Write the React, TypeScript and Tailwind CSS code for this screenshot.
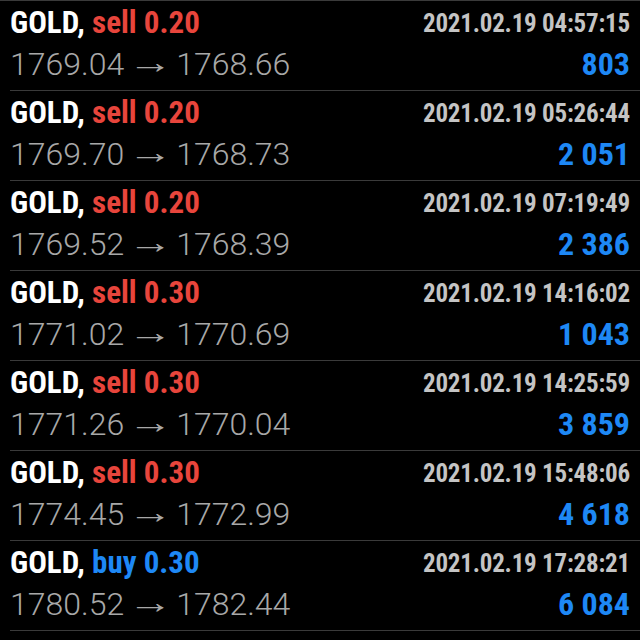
const trades = [
  { side: 'sell', vol: '0.20', open: '1769.04', close: '1768.66', time: '2021.02.19 04:57:15', profit: '803' },
  { side: 'sell', vol: '0.20', open: '1769.70', close: '1768.73', time: '2021.02.19 05:26:44', profit: '2 051' },
  { side: 'sell', vol: '0.20', open: '1769.52', close: '1768.39', time: '2021.02.19 07:19:49', profit: '2 386' },
  { side: 'sell', vol: '0.30', open: '1771.02', close: '1770.69', time: '2021.02.19 14:16:02', profit: '1 043' },
  { side: 'sell', vol: '0.30', open: '1771.26', close: '1770.04', time: '2021.02.19 14:25:59', profit: '3 859' },
  { side: 'sell', vol: '0.30', open: '1774.45', close: '1772.99', time: '2021.02.19 15:48:06', profit: '4 618' },
  { side: 'buy', vol: '0.30', open: '1780.52', close: '1782.44', time: '2021.02.19 17:28:21', profit: '6 084' },
]

const cond = { fontFamily: '"Liberation Sans Narrow", "Roboto Condensed", Roboto, sans-serif' }

export default function App() {
  return (
    <div className="w-[640px] h-[640px] bg-black overflow-hidden border-t border-[#3a3a3a]">
      {trades.map((t, i) => (
        <div key={i} className="ml-[10px] h-[90px] border-b border-[#3a3a3a] pr-[10px] flex flex-col">
          <div className="flex items-center justify-between h-[44px] pt-[1px]">
            <div className="text-[31px] font-bold" style={cond}>
              <span className="text-white">GOLD, </span>
              <span className={t.side === 'buy' ? 'text-[#1e88f5]' : 'text-[#e8453c]'}>{t.side} {t.vol}</span>
            </div>
            <div className="text-[25px] font-bold text-[#c4c4c4] tracking-[-0.2px]" style={cond}>{t.time}</div>
          </div>
          <div className="flex items-center justify-between h-[38px]">
            <div className="text-[32px] font-light text-[#a8a8a8] flex items-center" style={{ fontFamily: 'Roboto, sans-serif' }}>
              <span>{t.open}</span>
              <span className="inline-block mx-[10px] scale-x-[1.4] -translate-y-[2px]">→</span>
              <span>{t.close}</span>
            </div>
            <div className="text-[32px] font-bold text-[#1e88f5]" style={cond}>{t.profit}</div>
          </div>
        </div>
      ))}
    </div>
  )
}
